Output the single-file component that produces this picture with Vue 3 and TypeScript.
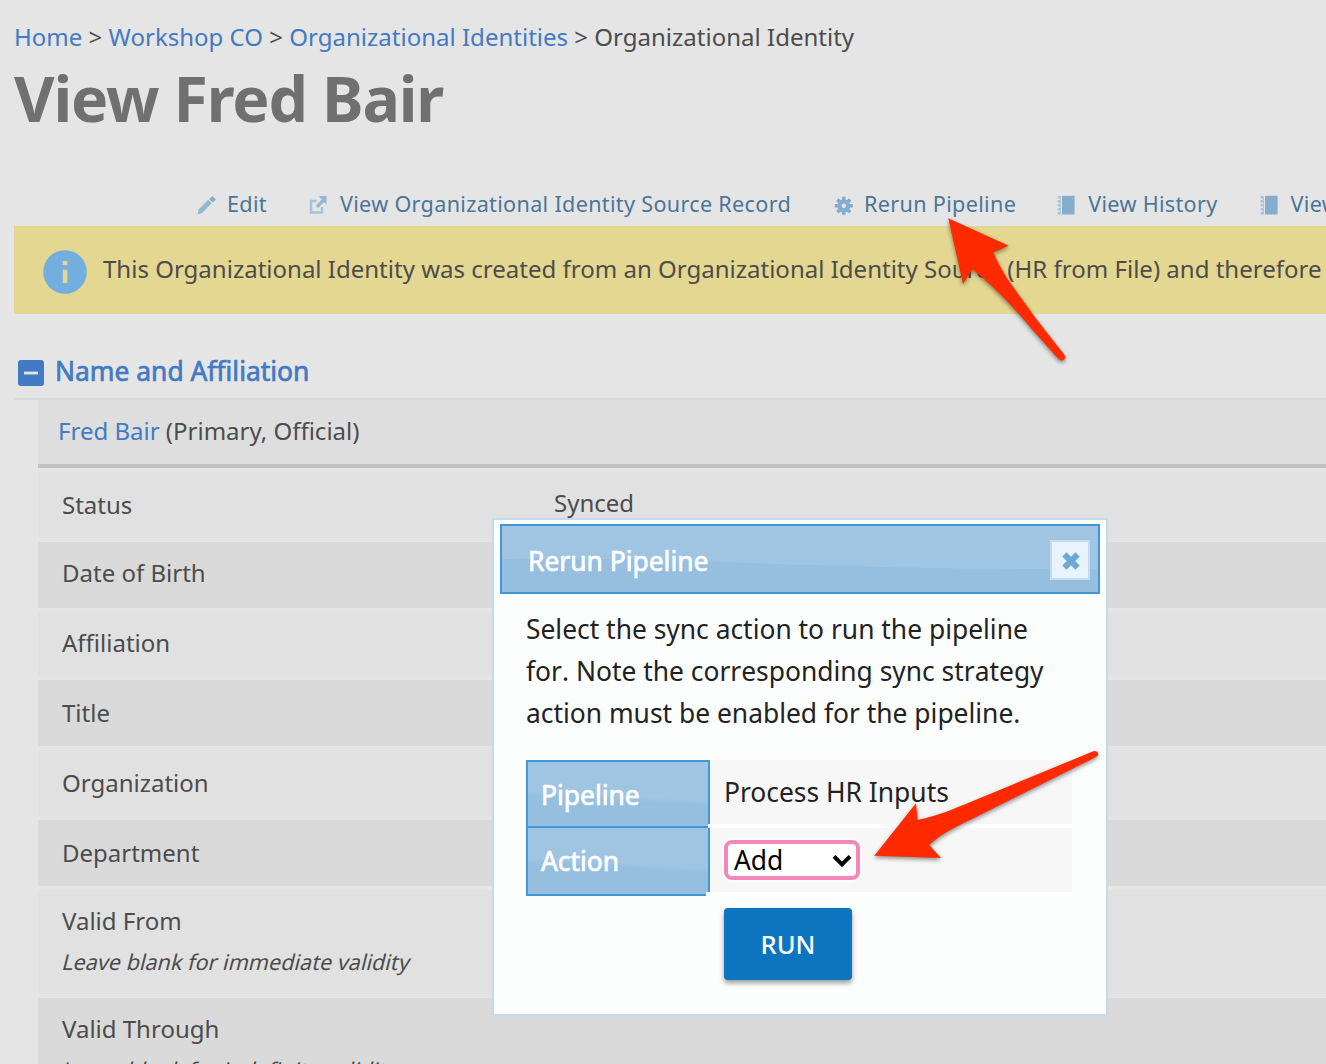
<script setup lang="ts">
interface MenuItem {
  icon: 'pencil' | 'external' | 'gear' | 'notebook'
  label: string
  left: number
}
interface Field {
  label: string
  value?: string
  hint?: string
  height: number
  shift: number
}

const menu: MenuItem[] = [
  { icon: 'pencil', label: 'Edit', left: 0 },
  { icon: 'external', label: 'View Organizational Identity Source Record', left: 42 },
  { icon: 'gear', label: 'Rerun Pipeline', left: 42 },
  { icon: 'notebook', label: 'View History', left: 41 },
  { icon: 'notebook', label: 'View', left: 42 },
]

const fields: Field[] = [
  { label: 'Status', value: 'Synced', height: 66, shift: 16 },
  { label: 'Date of Birth', height: 66, shift: 14 },
  { label: 'Affiliation', height: 64, shift: 14 },
  { label: 'Title', height: 66, shift: 16 },
  { label: 'Organization', height: 66, shift: 16 },
  { label: 'Department', height: 66, shift: 16 },
  { label: 'Valid From', hint: 'Leave blank for immediate validity', height: 104, shift: 14 },
  { label: 'Valid Through', hint: 'Leave blank for indefinite validity', height: 104, shift: 14 },
]
</script>

<template>
  <div class="page">
    <nav class="crumbs">
      <a>Home</a> &gt; <a>Workshop CO</a> &gt; <a>Organizational Identities</a> &gt; Organizational Identity
    </nav>
    <h1>View Fred Bair</h1>

    <ul class="menu">
      <li v-for="(item, i) in menu" :key="i" :style="{ marginLeft: item.left + 'px' }">
        <svg v-if="item.icon === 'pencil'" width="20" height="20" viewBox="0 0 20 20">
          <path d="M1.6 19.5 L2.6 14.5 L12.3 4.8 L15.7 8.2 L6.2 18 Z" fill="#94b8d2" />
          <path d="M13.2 4 L16.4 1 L20 4.4 L16.8 7.4 Z" />
        </svg>
        <svg v-else-if="item.icon === 'external'" width="20" height="20" viewBox="0 0 20 20">
          <path d="M7.5 6H2V17.5H13V12" fill="none" stroke="#a3c3da" stroke-width="2.4" />
          <path d="M9.5 1H17.5V9.5L15 7.2 9 13 6.9 10.8 12.7 4.6Z" fill="#94b8d2" />
        </svg>
        <svg v-else-if="item.icon === 'gear'" width="20" height="20" viewBox="0 0 20 20">
          <g transform="translate(0.8 0.8)">
            <path d="M10 1V19M1 10H19M3.6 3.6L16.4 16.4M16.4 3.6L3.6 16.4" stroke="#86adcb" stroke-width="3.6" />
            <circle cx="10" cy="10" r="6.6" />
            <circle cx="10" cy="10" r="2.2" fill="#e5e5e5" />
          </g>
        </svg>
        <svg v-else width="20" height="20" viewBox="0 0 20 20">
          <path d="M5 0.8H17.6V19.5H5Z" />
          <path d="M2 1V19.5" stroke="#a9c5d9" stroke-width="2.8" stroke-dasharray="2.6 1.4" />
          <path d="M3.4 1V19.5" stroke="#a9c5d9" stroke-width="1" />
        </svg>
        <span>{{ item.label }}</span>
      </li>
    </ul>

    <div class="notice">
      <svg width="44" height="44" viewBox="0 0 44 44">
        <circle cx="22" cy="22" r="21.8" fill="#74aedf" />
        <path d="M19.8 11h4.6v4.2h-4.6zM19.8 19.8h4.6v13.2h-4.6z" fill="#e4d792" />
      </svg>
      <span>This Organizational Identity was created from an Organizational Identity Source (HR from File) and therefore</span>
    </div>

    <section>
      <h2>
        <svg width="26" height="26" viewBox="0 0 26 26">
          <rect width="26" height="26" rx="3" fill="#427ac4" />
          <rect x="6" y="11.6" width="14" height="2.8" fill="#e5e5e5" />
        </svg>
        <span>Name and Affiliation</span>
      </h2>
      <div class="details">
        <div class="person"><a>Fred Bair</a> (Primary, Official)</div>
        <div
          v-for="field in fields"
          :key="field.label"
          class="row"
          :style="{ height: field.height + 'px', paddingTop: field.shift + 'px' }"
        >
          <div class="name">
            {{ field.label }}
            <div v-if="field.hint" class="hint">{{ field.hint }}</div>
          </div>
          <div v-if="field.value" class="value">{{ field.value }}</div>
        </div>
      </div>
    </section>

    <div class="dialog">
      <header>
        <svg class="sheen" width="596" height="66" viewBox="0 0 596 66">
          <path d="M0 33 C180 30 300 44 596 43 V66 H0Z" fill="#95bedf" />
        </svg>
        <span>Rerun Pipeline</span>
        <button class="close" aria-label="Close">
          <svg width="20" height="20" viewBox="0 0 20 20">
            <path d="M3.4 3.4L16.6 16.6M16.6 3.4L3.4 16.6" stroke="#6da8d6" stroke-width="6" />
          </svg>
        </button>
      </header>
      <p>Select the sync action to run the pipeline<br />for. Note the corresponding sync strategy<br />action must be enabled for the pipeline.</p>
      <div class="grid">
        <div class="labels">
          <div class="th">Pipeline</div>
          <div class="th">Action</div>
        </div>
        <div class="cells">
          <div class="td">Process HR Inputs</div>
          <div class="td">
            <div class="select">
              <span>Add</span>
              <svg width="20" height="14" viewBox="0 0 20 14">
                <path d="M2 2.3L10 10.3L18 2.3" fill="none" stroke="#000" stroke-width="4" />
              </svg>
            </div>
          </div>
        </div>
      </div>
      <button class="run">RUN</button>
    </div>

    <svg class="arrows" width="1326" height="1064" viewBox="0 0 1326 1064">
      <path d="M948.3 218.3 L1008.8 245.7 L993.3 252.3 C1004 278 1022 298 1034 316 L1064.5 355 Q1066.5 360 1061.5 360.5 L1058.5 359 L1033 330.5 C1015 309 995 287 972.3 269.3 L963 284Z" />
      <path d="M874.3 855.7 L916 803.3 L917.7 820 C938 816 956 808 973 801 L1094 751 Q1099 751 1098 755.5 L1092 759 L973 818.5 C958 826 942 833 929.3 845 L941 858Z" />
    </svg>
  </div>
</template>

<style>
body {
  margin: 0;
  overflow: hidden;
}
</style>

<style scoped>
* {
  box-sizing: border-box;
}
.page {
  position: relative;
  width: 1326px;
  height: 1064px;
  overflow: hidden;
  padding-left: 14px;
  background: #e5e5e5;
  color: #4c4c4c;
  font: 24px/34px 'Noto Sans', sans-serif;
  white-space: nowrap;
}
a {
  color: #427ac4;
}
.crumbs {
  padding-top: 20px;
  height: 64px;
  letter-spacing: 0.01px;
}
h1 {
  margin: 0;
  height: 122px;
  color: #707070;
  font-size: 62.5px;
  line-height: 68px;
  letter-spacing: -1.12px;
}
.menu {
  display: flex;
  margin: 0;
  padding: 0 0 0 182px;
  height: 40px;
  list-style: none;
  color: #4b7599;
  font-size: 21.6px;
  line-height: 35px;
  letter-spacing: 0.32px;
}
.menu li {
  display: flex;
  flex: none;
}
.menu svg {
  flex: none;
  margin: 9px 11px 0 0;
  fill: #86adcb;
  overflow: visible;
}
.notice {
  display: flex;
  height: 88px;
  padding: 24px 0 0 29px;
  background: #e4d792;
}
.notice svg {
  flex: none;
  margin-right: 16px;
}
.notice span {
  line-height: 38px;
  letter-spacing: 0.01px;
}
h2 {
  display: flex;
  margin: 0;
  height: 86px;
  padding: 40px 0 0 4px;
  border-bottom: 2px solid #dadada;
  color: #427ac4;
  font-size: 26.4px;
  font-weight: 400;
  line-height: 34px;
  -webkit-text-stroke: 0.7px currentColor;
}
h2 svg {
  margin: 6px 11px 0 0;
}
.details {
  margin-left: 24px;
}
.person {
  height: 68px;
  padding: 14px 0 0 20px;
  border-bottom: 4px solid #c2c2c2;
  background: #dedede;
}
.row {
  display: flex;
  margin-top: 4px;
  padding-left: 24px;
  background: #e1e1e1;
}
.row:nth-child(odd) {
  background: #dadada;
}
.name {
  width: 492px;
}
.hint {
  width: fit-content;
  margin: 7px 0 0 1px;
  font-size: 21.6px;
  transform: skewX(-14deg);
}
.value {
  margin-top: -2px;
}
.dialog {
  position: absolute;
  left: 492px;
  top: 518px;
  width: 616px;
  height: 498px;
  padding: 4px 6px;
  border: 2px solid #c5dbec;
  background: #fcfefd;
  color: #222;
  font-size: 26.4px;
}
header {
  position: relative;
  display: flex;
  align-items: center;
  justify-content: space-between;
  height: 70px;
  padding: 0 8px 0 26px;
  border: 2px solid #4297d7;
  background: #9fc5e3;
  color: #fff;
  -webkit-text-stroke: 0.7px currentColor;
}
header span {
  position: relative;
  top: 2px;
}
.sheen {
  position: absolute;
  left: 0;
  top: 0;
}
.close {
  position: relative;
  top: 1px;
  display: flex;
  align-items: center;
  justify-content: center;
  width: 40px;
  height: 40px;
  padding: 1px 0 0 1px;
  border: 2px solid #c5dbec;
  background: #e8f3fd;
}
p {
  margin: 14px 0 0 26px;
  line-height: 42px;
  font-kerning: none;
}
.grid {
  display: flex;
  margin: 26px 0 0 26px;
}
.labels {
  width: 184px;
  border-left: 2px solid #4297d7;
}
.th {
  position: relative;
  height: 66px;
  padding: 16px 0 0 13px;
  border: solid #4297d7;
  border-width: 2px 2px 0 0;
  background: linear-gradient(183deg, #9fc5e3 0, #9fc5e3 52%, #95bedf 60%);
  color: #fff;
  -webkit-text-stroke: 0.7px currentColor;
}
.th::after {
  content: '';
  position: absolute;
  z-index: 1;
  right: -2px;
  top: 62px;
  width: 2px;
  height: 4px;
  background: #fff;
}
.th + .th {
  height: 70px;
  border-bottom-width: 2px;
}
.th + .th::after {
  top: 64px;
  width: 4px;
}
.cells {
  width: 362px;
  margin-right: 28px;
}
.td {
  height: 68px;
  padding: 15px 0 0 14px;
  border-bottom: 4px solid #fff;
  background: #f7f7f7;
}
.td + .td {
  padding-top: 12px;
}
.select {
  display: flex;
  width: 136px;
  height: 40px;
  padding: 0 4px 0 6px;
  border: 4px solid #f586b9;
  border-radius: 8px;
  box-shadow: 0 0 0 2px #fff;
  background: #fff;
  color: #000;
  line-height: 33px;
  justify-content: space-between;
}
.select svg {
  margin-top: 10px;
}
.run {
  display: block;
  width: 128px;
  height: 72px;
  margin: 12px 0 0 224px;
  padding: 0;
  border: 0;
  border-radius: 4px;
  background: #0d74c0;
  box-shadow: 0 3px 5px rgba(0, 0, 0, 0.4);
  color: #fff;
  font: 500 25.6px 'Noto Sans', sans-serif;
}
.arrows {
  position: absolute;
  left: 0;
  top: 0;
  fill: #ff2a00;
  filter: drop-shadow(0 2px 2px rgba(0, 0, 0, 0.45));
}
</style>
